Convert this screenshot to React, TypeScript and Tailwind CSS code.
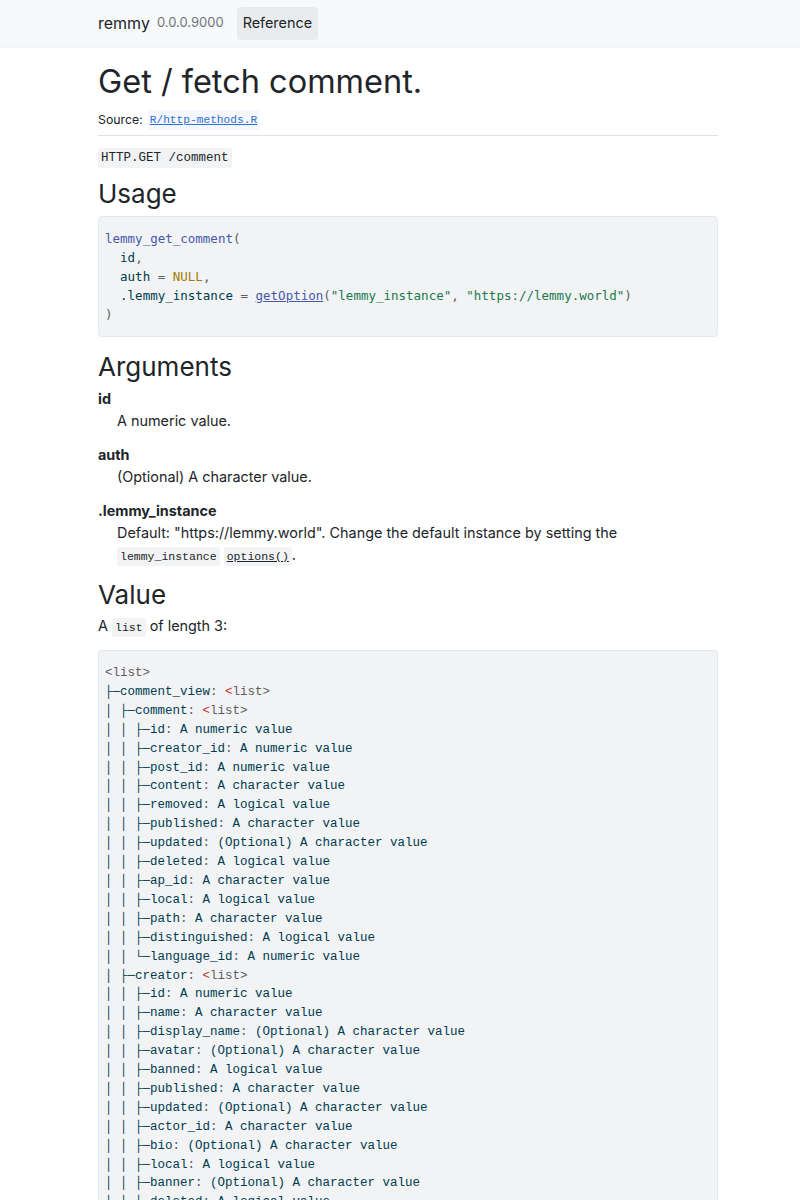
import React from 'react';

type Row = { prefix: string; name: string; value: string | null };

const rows: Row[] = [
  { prefix: '├─', name: 'comment_view', value: null },
  { prefix: '│ ├─', name: 'comment', value: null },
  { prefix: '│ │ ├─', name: 'id', value: 'A numeric value' },
  { prefix: '│ │ ├─', name: 'creator_id', value: 'A numeric value' },
  { prefix: '│ │ ├─', name: 'post_id', value: 'A numeric value' },
  { prefix: '│ │ ├─', name: 'content', value: 'A character value' },
  { prefix: '│ │ ├─', name: 'removed', value: 'A logical value' },
  { prefix: '│ │ ├─', name: 'published', value: 'A character value' },
  { prefix: '│ │ ├─', name: 'updated', value: '(Optional) A character value' },
  { prefix: '│ │ ├─', name: 'deleted', value: 'A logical value' },
  { prefix: '│ │ ├─', name: 'ap_id', value: 'A character value' },
  { prefix: '│ │ ├─', name: 'local', value: 'A logical value' },
  { prefix: '│ │ ├─', name: 'path', value: 'A character value' },
  { prefix: '│ │ ├─', name: 'distinguished', value: 'A logical value' },
  { prefix: '│ │ └─', name: 'language_id', value: 'A numeric value' },
  { prefix: '│ ├─', name: 'creator', value: null },
  { prefix: '│ │ ├─', name: 'id', value: 'A numeric value' },
  { prefix: '│ │ ├─', name: 'name', value: 'A character value' },
  { prefix: '│ │ ├─', name: 'display_name', value: '(Optional) A character value' },
  { prefix: '│ │ ├─', name: 'avatar', value: '(Optional) A character value' },
  { prefix: '│ │ ├─', name: 'banned', value: 'A logical value' },
  { prefix: '│ │ ├─', name: 'published', value: 'A character value' },
  { prefix: '│ │ ├─', name: 'updated', value: '(Optional) A character value' },
  { prefix: '│ │ ├─', name: 'actor_id', value: 'A character value' },
  { prefix: '│ │ ├─', name: 'bio', value: '(Optional) A character value' },
  { prefix: '│ │ ├─', name: 'local', value: 'A logical value' },
  { prefix: '│ │ ├─', name: 'banner', value: '(Optional) A character value' },
  { prefix: '│ │ ├─', name: 'deleted', value: 'A logical value' },
  { prefix: '│ │ ├─', name: 'matrix_user_id', value: '(Optional) A character value' },
  { prefix: '│ │ ├─', name: 'bot_account', value: 'A logical value' },
];

const sans = { fontFamily: 'Inter, "Noto Sans", sans-serif' };

const InlineCode: React.FC<{ children: React.ReactNode; className?: string }> = ({ children, className }) => (
  <code className={`font-['Liberation_Mono',monospace] text-[11.5px] leading-none bg-[#f1f3f5] rounded-[3px] px-[3px] py-[3px] ${className ?? ''}`}>
    {children}
  </code>
);

export default function App() {
  return (
    <div className="min-h-[1200px] bg-white text-[#212529] text-[14.4px]" style={sans}>
      <header className="h-[48px] bg-[#f8f9fa] border-b-[4px] border-[#f3f5f7] pl-[98px] pt-[2px] flex items-center">
        <span className="text-[16px] text-[#212529]">remmy</span>
        <span className="text-[13px] text-[#6c757d] ml-[7px]">0.0.0.9000</span>
        <span className="ml-[13px] h-[33px] px-[6px] flex items-center bg-[#e9ecef] rounded-[4px] text-[14.4px] text-[#212529]">
          Reference
        </span>
      </header>

      <main className="pl-[98px] pr-[82px]">
        <div className="pt-[14px] pb-[5px] border-b border-[#dee2e6]">
          <h1 className="text-[32.5px] leading-[40px] text-[#212529] font-normal">Get / fetch comment.</h1>
          <div className="mt-[8px] text-[12.3px] leading-[20px] flex items-center gap-[5px]">
            <span>Source:</span>
            <a className="font-['Liberation_Mono',monospace] text-[11.2px] text-[#2f6fd6] underline bg-[#f4f7fc] px-[2px]">
              R/http-methods.R
            </a>
          </div>
        </div>

        <p className="mt-[9px] leading-[22px]">
          <code className="font-['Liberation_Mono',monospace] text-[12.5px] leading-none bg-[#f1f3f5] rounded-[3px] px-[3px] py-[3px] text-[#212529]">
            HTTP.GET /comment
          </code>
        </p>

        <h2 className="mt-[11px] text-[26px] leading-[31px] font-normal">Usage</h2>
        <pre className="mt-[7px] bg-[#f1f3f5] border border-[#e3e6ea] rounded-[4px] py-[12px] px-[6px] font-['DejaVu_Sans_Mono',monospace] text-[12.5px] leading-[19px] text-[#003b4f]">
          <div>
            <span className="text-[#4758ab]">lemmy_get_comment</span>
            <span className="text-[#5e5e5e]">(</span>
          </div>
          <div>
            {'  '}id<span className="text-[#5e5e5e]">,</span>
          </div>
          <div>
            {'  '}auth <span className="text-[#5e5e5e]">=</span> <span className="text-[#a67c00]">NULL</span>
            <span className="text-[#5e5e5e]">,</span>
          </div>
          <div>
            {'  '}.lemmy_instance <span className="text-[#5e5e5e]">=</span>{' '}
            <span className="text-[#4758ab] underline">getOption</span>
            <span className="text-[#5e5e5e]">(</span>
            <span className="text-[#20794d]">"lemmy_instance"</span>
            <span className="text-[#5e5e5e]">, </span>
            <span className="text-[#20794d]">"https://lemmy.world"</span>
            <span className="text-[#5e5e5e]">)</span>
          </div>
          <div className="text-[#5e5e5e]">)</div>
        </pre>

        <h2 className="mt-[14px] text-[26px] leading-[31px] font-normal">Arguments</h2>
        <dl className="mt-[6px] leading-[22px]">
          <dt className="font-bold">id</dt>
          <dd className="ml-[19px]">A numeric value.</dd>
          <dt className="font-bold mt-[12px]">auth</dt>
          <dd className="ml-[19px]">(Optional) A character value.</dd>
          <dt className="font-bold mt-[12px]">.lemmy_instance</dt>
          <dd className="ml-[19px]">
            Default: "https://lemmy.world". Change the default instance by setting the{' '}
            <InlineCode>lemmy_instance</InlineCode> <InlineCode className="underline">options()</InlineCode>.
          </dd>
        </dl>

        <h2 className="mt-[13px] text-[26px] leading-[31px] font-normal">Value</h2>
        <p className="mt-[5px] leading-[22px]">
          A <InlineCode>list</InlineCode> of length 3:
        </p>
        <pre className="mt-[13px] bg-[#f1f3f5] border border-[#e3e6ea] rounded-[4px] pt-[13px] pb-[11px] px-[6px] font-['Liberation_Mono',monospace] text-[12.5px] leading-[18.9px] text-[#003b4f] overflow-hidden">
          <div className="text-[#5e5e5e]">{'<list>'}</div>
          {rows.map((r, i) => (
            <div key={i}>
              {r.prefix}
              {r.name}
              <span className="text-[#5e5e5e]">: </span>
              {r.value === null ? (
                <>
                  <span className="text-[#c4302b]">{'<'}</span>
                  <span className="text-[#5e5e5e]">{'list>'}</span>
                </>
              ) : (
                r.value
              )}
            </div>
          ))}
        </pre>
      </main>
    </div>
  );
}
